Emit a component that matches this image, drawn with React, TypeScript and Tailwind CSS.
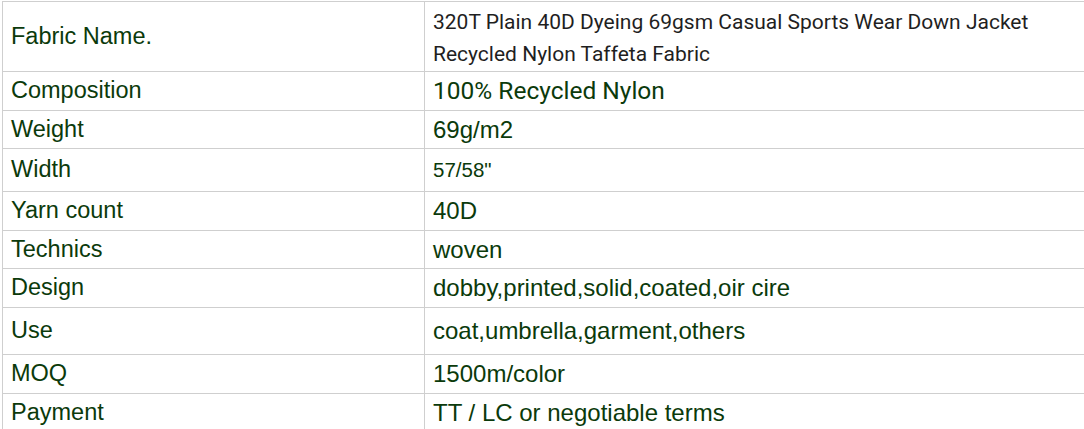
import React from "react";

const ARIAL = "font-['Liberation_Sans',Arial,sans-serif]";
const ROBOTO = "font-['Roboto',sans-serif]";

type Row = { label: string; h: string; value: React.ReactNode };

const rows: Row[] = [
  {
    label: "Fabric Name.",
    h: "h-[70px]",
    value: (
      <div className={`${ROBOTO} text-[21px] leading-[32px] text-[#1f1f1f] pt-[2px]`}>
        320T Plain 40D Dyeing 69gsm Casual Sports Wear Down Jacket
        <br />
        Recycled Nylon Taffeta Fabric
      </div>
    ),
  },
  {
    label: "Composition",
    h: "h-[39px]",
    value: <span className={`${ROBOTO} text-[24.5px] text-[#0b3a0b]`}>100% Recycled Nylon</span>,
  },
  { label: "Weight", h: "h-[38px]", value: <span>69g/m2</span> },
  {
    label: "Width",
    h: "h-[43px]",
    value: <span className="text-[20.5px]">57/58"</span>,
  },
  { label: "Yarn count", h: "h-[39px]", value: <span>40D</span> },
  { label: "Technics", h: "h-[38px]", value: <span>woven</span> },
  { label: "Design", h: "h-[39px]", value: <span>dobby,printed,solid,coated,oir cire</span> },
  { label: "Use", h: "h-[47px]", value: <span>coat,umbrella,garment,others</span> },
  { label: "MOQ", h: "h-[39px]", value: <span>1500m/color</span> },
  { label: "Payment", h: "h-[39px]", value: <span>TT / LC or negotiable terms</span> },
];

export default function App() {
  return (
    <div className="w-[1084px] h-[429px] overflow-hidden bg-white">
      <div className={`mt-px ml-[2px] w-[1100px] border-t border-l border-[#cfcfcf] ${ARIAL} text-[#0b3a0b]`}>
        {rows.map((r) => (
          <div key={r.label} className={`flex border-b border-[#cfcfcf] ${r.h}`}>
            <div className="w-[422px] shrink-0 border-r border-[#cfcfcf] pl-[8px] flex items-center text-[23.5px]">
              {r.label}
            </div>
            <div className="flex-1 pl-[8px] flex items-center text-[24px]">{r.value}</div>
          </div>
        ))}
      </div>
    </div>
  );
}
